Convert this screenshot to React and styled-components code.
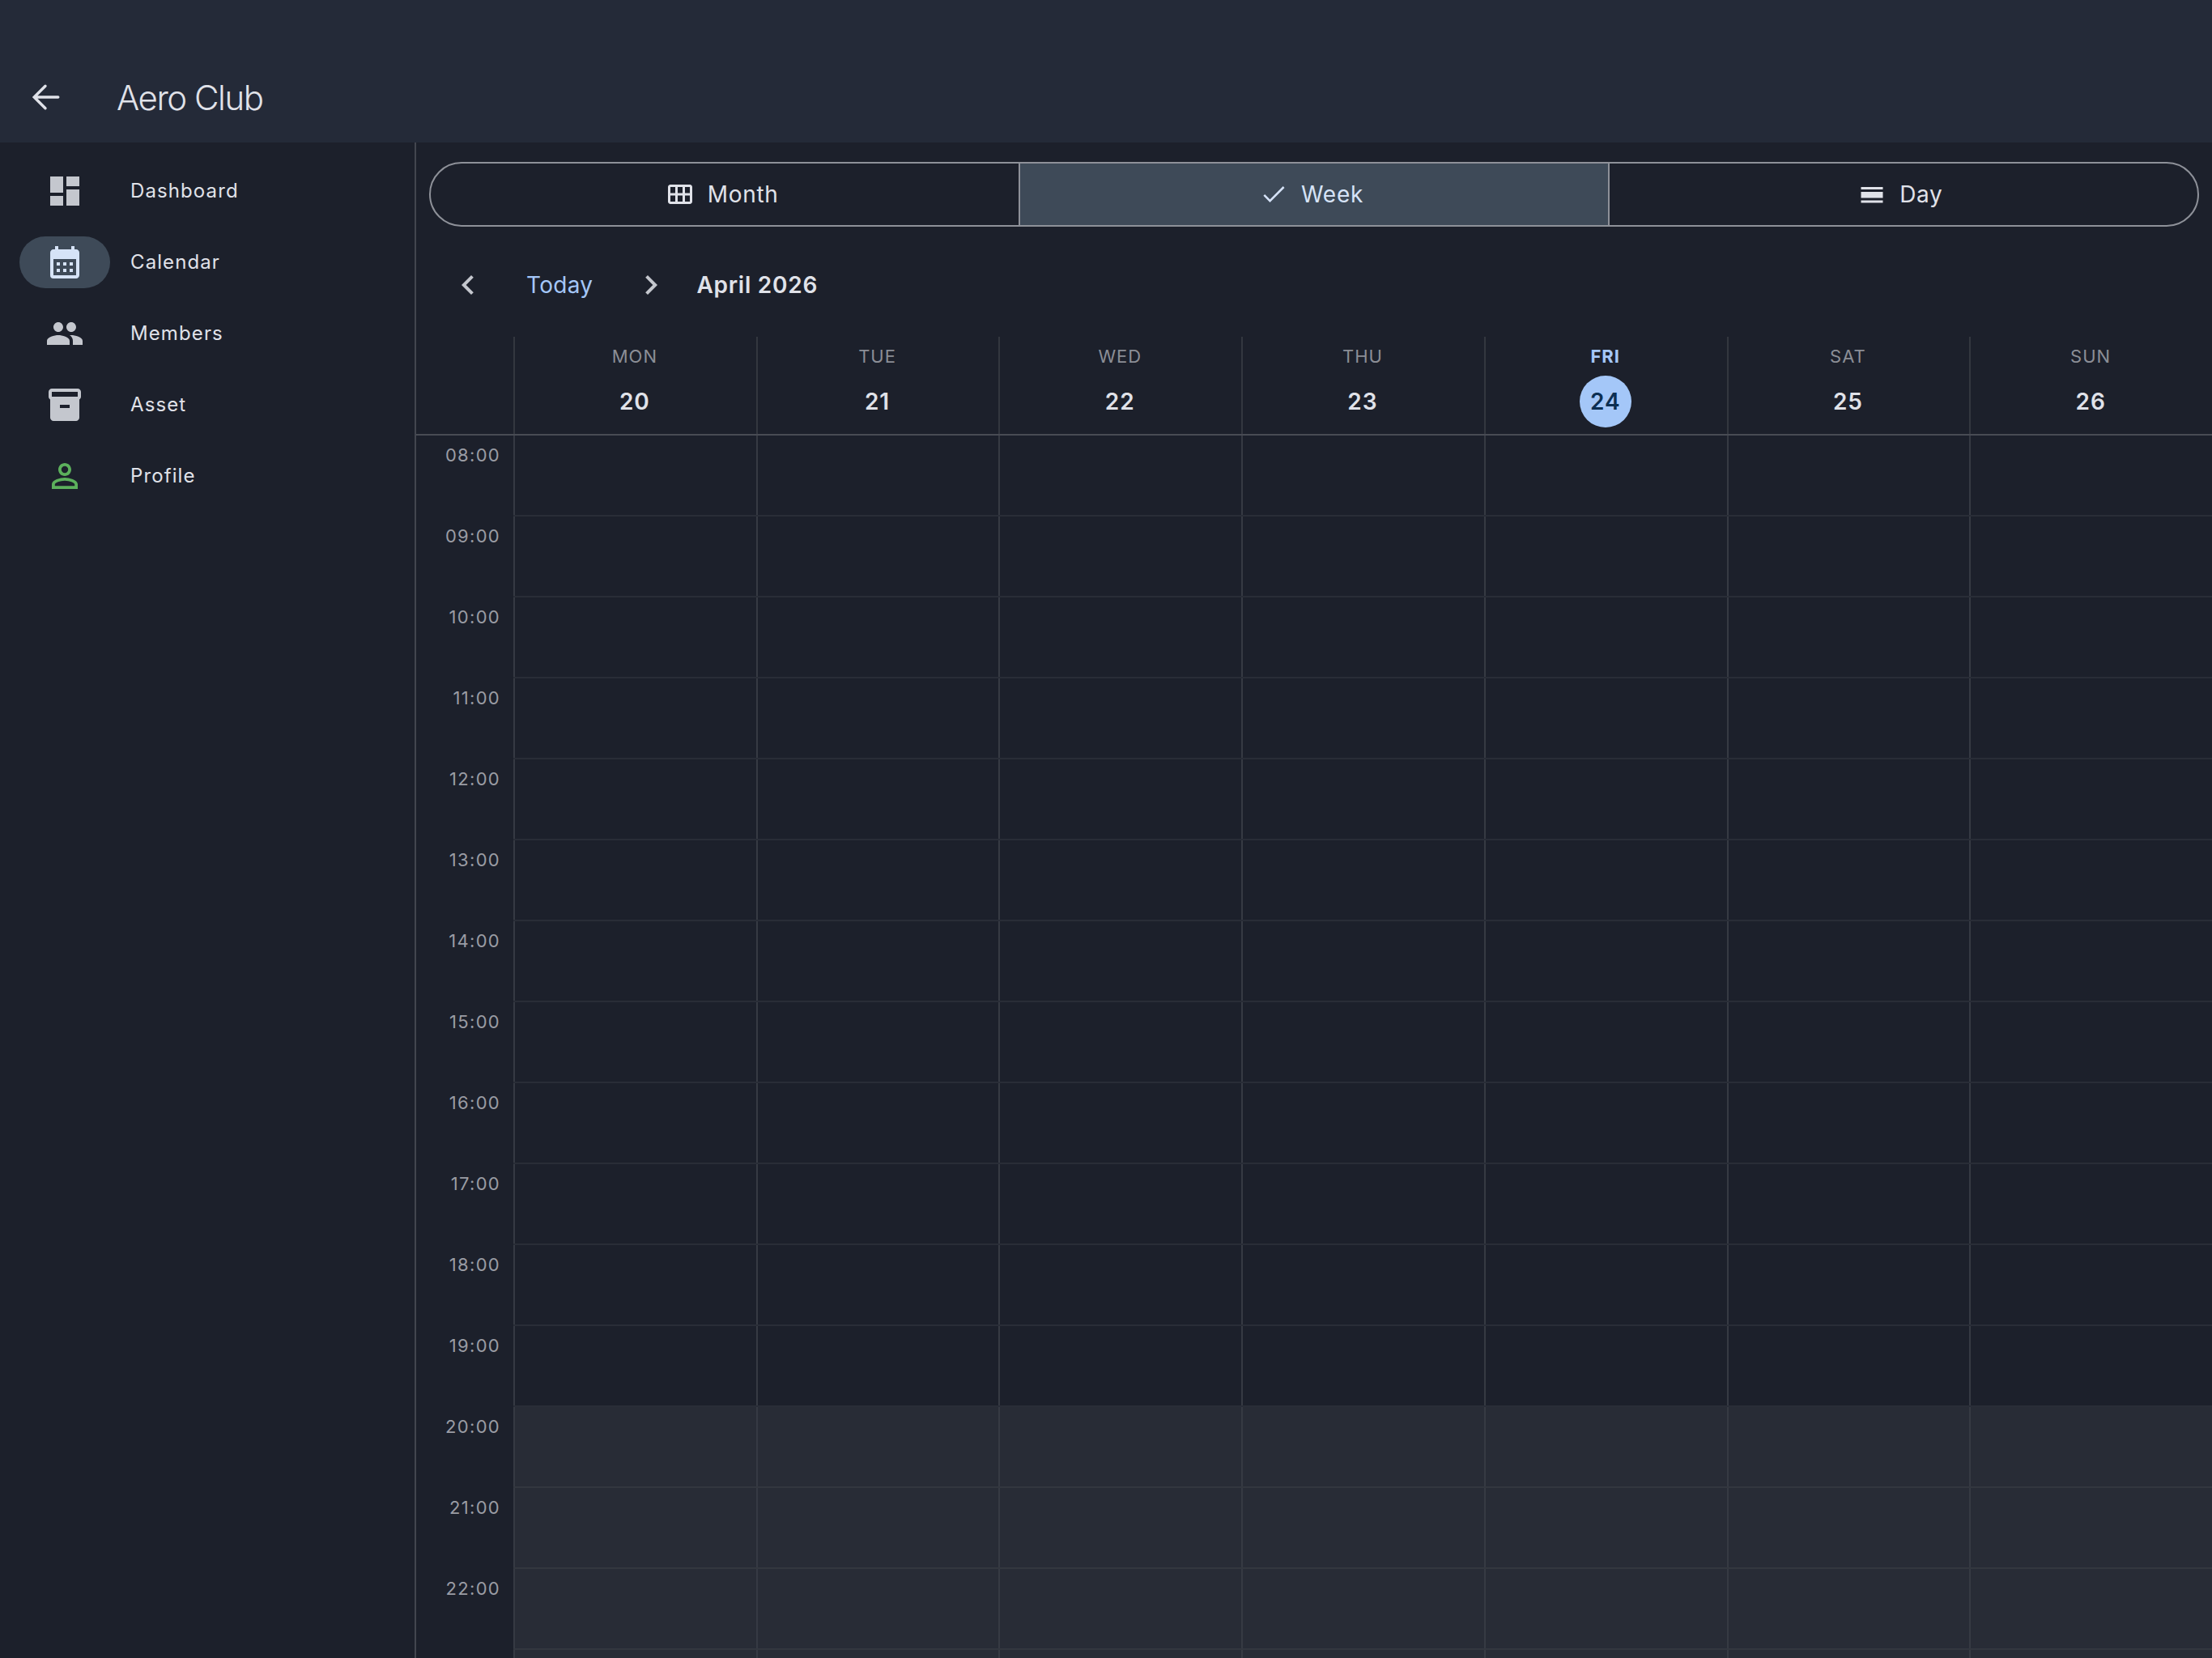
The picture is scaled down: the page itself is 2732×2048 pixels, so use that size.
import React from "react";
import styled, { createGlobalStyle } from "styled-components";
import {
  MdDashboard,
  MdCalendarMonth,
  MdPeople,
  MdInventory2,
  MdPersonOutline,
  MdOutlineCalendarViewMonth,
  MdCalendarViewDay,
  MdChevronLeft,
  MdChevronRight,
} from "react-icons/md";

const GlobalStyle = createGlobalStyle`
  html, body {
    margin: 0;
    padding: 0;
    background: #1c202b;
  }
  * {
    box-sizing: border-box;
  }
`;

const navItems = [
  { label: "Dashboard", Icon: MdDashboard },
  { label: "Calendar", Icon: MdCalendarMonth, active: true },
  { label: "Members", Icon: MdPeople },
  { label: "Asset", Icon: MdInventory2 },
  { label: "Profile", Icon: MdPersonOutline, green: true },
];

const days = [
  { name: "MON", date: 20 },
  { name: "TUE", date: 21 },
  { name: "WED", date: 22 },
  { name: "THU", date: 23 },
  { name: "FRI", date: 24, today: true },
  { name: "SAT", date: 25 },
  { name: "SUN", date: 26 },
];

const hours = [8, 9, 10, 11, 12, 13, 14, 15, 16, 17, 18, 19, 20, 21, 22, 23];

const ArrowBack = () => (
  <svg width="48" height="48" viewBox="0 0 24 24" fill="none" stroke="currentColor" strokeWidth="1.7" strokeLinecap="round">
    <path d="M19.9 12H5.2M12 5.1 5.1 12l6.9 6.9" />
  </svg>
);

const CheckMark = () => (
  <svg width="36" height="36" viewBox="0 0 24 24" fill="none" stroke="currentColor" strokeWidth="1.7">
    <path d="M4.2 12.6 9 17.4 20.4 6" />
  </svg>
);

export default function App() {
  return (
    <Page>
      <GlobalStyle />
      <TopBar>
        <BackButton>
          <ArrowBack />
        </BackButton>
        <Title>Aero Club</Title>
      </TopBar>
      <Body>
        <Sidebar>
          {navItems.map(({ label, Icon, active, green }) => (
            <NavItem key={label}>
              <NavIcon $active={active} $green={green}>
                <Icon size={48} />
              </NavIcon>
              <NavLabel>{label}</NavLabel>
            </NavItem>
          ))}
        </Sidebar>
        <Main>
          <Segmented>
            <Segment>
              <MdOutlineCalendarViewMonth size={36} />
              Month
            </Segment>
            <Segment $selected>
              <CheckMark />
              Week
            </Segment>
            <Segment>
              <MdCalendarViewDay size={36} />
              Day
            </Segment>
          </Segmented>
          <Toolbar>
            <ChevronButton>
              <MdChevronLeft size={48} />
            </ChevronButton>
            <TodayLink>Today</TodayLink>
            <ChevronButton>
              <MdChevronRight size={48} />
            </ChevronButton>
            <MonthTitle>April 2026</MonthTitle>
          </Toolbar>
          <WeekHeader>
            <TimeSpacer />
            {days.map((d) => (
              <DayHead key={d.name}>
                <DayName $today={d.today}>{d.name}</DayName>
                <DayDate $today={d.today}>{d.date}</DayDate>
              </DayHead>
            ))}
          </WeekHeader>
          <Grid>
            {hours.map((h) => (
              <HourRow key={h}>
                <TimeLabel>{h < 23 && `${String(h).padStart(2, "0")}:00`}</TimeLabel>
                <HourCells $evening={h >= 20}>
                  {days.map((d) => (
                    <Cell key={d.name} />
                  ))}
                </HourCells>
              </HourRow>
            ))}
          </Grid>
        </Main>
      </Body>
    </Page>
  );
}

const Page = styled.div`
  width: 100%;
  height: 100vh;
  display: flex;
  flex-direction: column;
  overflow: hidden;
  background: #1c202b;
  font-family: Inter, "Noto Sans", sans-serif;
  color: #e0e2e9;
`;

const TopBar = styled.header`
  height: 176px;
  flex-shrink: 0;
  padding-top: 64px;
  display: flex;
  align-items: center;
  background: #242a38;
`;

const BackButton = styled.div`
  width: 48px;
  height: 48px;
  margin-left: 32px;
  color: #e0e2e9;
  display: flex;
`;

const Title = styled.h1`
  margin: 2px 0 0 64px;
  font-size: 42px;
  font-weight: 300;
  line-height: 56px;
  letter-spacing: -1.5px;
  color: #e0e2e9;
`;

const Body = styled.div`
  flex: 1;
  display: flex;
  min-height: 0;
`;

const Sidebar = styled.nav`
  width: 514px;
  flex-shrink: 0;
  padding-top: 16px;
  border-right: 2px solid #43464f;
`;

const NavItem = styled.div`
  height: 88px;
  display: flex;
  align-items: center;
  padding-left: 24px;
`;

const NavIcon = styled.div`
  width: 112px;
  height: 64px;
  border-radius: 32px;
  display: flex;
  align-items: center;
  justify-content: center;
  background: ${(p) => (p.$active ? "#3e4a58" : "transparent")};
  color: ${(p) => (p.$active ? "#d6e3f7" : p.$green ? "#5cb05c" : "#c4c7ce")};
`;

const NavLabel = styled.span`
  margin-left: 25px;
  padding-bottom: 2px;
  font-size: 24px;
  font-weight: 400;
  letter-spacing: 1.1px;
  color: #e0e2e9;
`;

const Main = styled.main`
  flex: 1;
  min-width: 0;
  display: flex;
  flex-direction: column;
`;

const Segmented = styled.div`
  margin: 24px 16px 0;
  height: 80px;
  flex-shrink: 0;
  display: grid;
  grid-template-columns: repeat(3, 1fr);
  border: 2px solid #8e9199;
  border-radius: 40px;
  overflow: hidden;
`;

const Segment = styled.div`
  display: flex;
  align-items: center;
  justify-content: center;
  gap: 16px;
  padding-right: 8px;
  margin-left: -1px;
  font-size: 28px;
  font-weight: 400;
  letter-spacing: 0.7px;
  background: ${(p) => (p.$selected ? "#3e4a58" : "transparent")};
  color: ${(p) => (p.$selected ? "#d6e3f7" : "#e0e2e9")};
  border-left: 2px solid #8e9199;

  &:first-child {
    margin-left: 0;
    border-left: none;
  }
`;

const Toolbar = styled.div`
  height: 136px;
  flex-shrink: 0;
  padding: 8px 0 0 40px;
  display: flex;
  align-items: center;
`;

const ChevronButton = styled.div`
  width: 48px;
  height: 48px;
  display: flex;
  color: #c4c7ce;
`;

const TodayLink = styled.span`
  margin: 0 48px;
  font-size: 28px;
  letter-spacing: 0.3px;
  color: #a4c7f8;
`;

const MonthTitle = styled.span`
  margin-left: 32px;
  font-size: 28px;
  font-weight: 600;
  letter-spacing: 0.75px;
  color: #e0e2e9;
`;

const WeekHeader = styled.div`
  height: 122px;
  flex-shrink: 0;
  display: grid;
  grid-template-columns: 120px repeat(7, 1fr);
  border-bottom: 2px solid #484b54;
`;

const TimeSpacer = styled.div``;

const DayHead = styled.div`
  border-left: 2px solid #33373f;
  padding: 8px 2px 0 0;
  display: flex;
  flex-direction: column;
  align-items: center;
`;

const DayName = styled.div`
  height: 32px;
  line-height: 32px;
  font-size: 22px;
  letter-spacing: 1px;
  font-weight: ${(p) => (p.$today ? 700 : 400)};
  color: ${(p) => (p.$today ? "#a4c7f8" : "#8b8e96")};
`;

const DayDate = styled.div`
  width: 64px;
  height: 64px;
  margin-top: 8px;
  border-radius: 50%;
  display: flex;
  align-items: center;
  justify-content: center;
  font-size: 28px;
  font-weight: 600;
  letter-spacing: 1px;
  background: ${(p) => (p.$today ? "#a4c7f8" : "transparent")};
  color: ${(p) => (p.$today ? "#0c2f52" : "#e0e2e9")};
`;

const Grid = styled.div`
  flex: 1;
  min-height: 0;
  overflow: hidden;
`;

const HourRow = styled.div`
  height: 100px;
  display: grid;
  grid-template-columns: 120px 1fr;
`;

const TimeLabel = styled.div`
  padding: 8px 16px 0 0;
  text-align: right;
  font-size: 22px;
  line-height: 32px;
  letter-spacing: 1.3px;
  color: #9a9ca4;
`;

const HourCells = styled.div`
  display: grid;
  grid-template-columns: repeat(7, 1fr);
  background: ${(p) => (p.$evening ? "#282c36" : "transparent")};
  border-bottom: 2px solid ${(p) => (p.$evening ? "#33373f" : "#292d37")};
`;

const Cell = styled.div`
  border-left: 2px solid #363a43;
`;
